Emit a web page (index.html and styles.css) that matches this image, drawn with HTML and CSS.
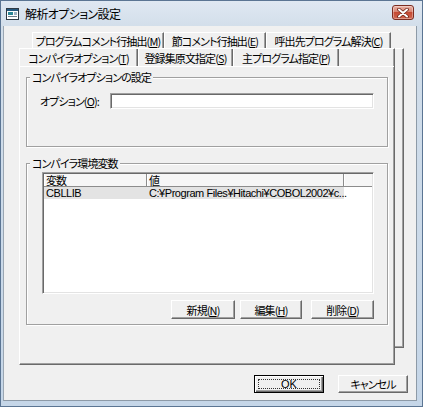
FILE: index.html
```html
<!DOCTYPE html>
<html lang="ja">
<head>
<meta charset="utf-8">
<title>解析オプション設定</title>
<link rel="stylesheet" href="styles.css">
</head>
<body>
<div class="window">
  <div class="titlebar">
    <span class="app-icon">
      <svg width="13" height="12" viewBox="0 0 13 12">
        <rect x="0.5" y="0.5" width="12" height="11" fill="#ffffff" stroke="#2f3a44"/>
        <rect x="1" y="1" width="11" height="2" fill="#24587e"/>
        <rect x="2" y="4" width="5" height="3" fill="#2b8796"/>
        <rect x="2" y="8" width="9" height="1" fill="#6a7c8a"/>
        <rect x="8" y="4" width="3" height="3" fill="#9fb4c4"/>
      </svg>
    </span>
    <span class="title">解析オプション設定</span>
    <span class="close-btn">
      <svg width="12" height="10" viewBox="0 0 12 10">
        <path d="M2 1.5 L10 8.5 M10 1.5 L2 8.5" stroke="#6d2418" stroke-width="3.6" stroke-linecap="round"/>
        <path d="M2 1.5 L10 8.5 M10 1.5 L2 8.5" stroke="#ffffff" stroke-width="2" stroke-linecap="round"/>
      </svg>
    </span>
  </div>
  <div class="client">
    <div class="tabstack">
      <div class="layer layer-back">
        <div class="tabrow">
          <div class="tab tab-b1">プログラムコメント行抽出(<u>M</u>)</div>
          <div class="tab tab-b2">節コメント行抽出(<u>E</u>)</div>
          <div class="tab tab-b3">呼出先プログラム解決(<u>C</u>)</div>
        </div>
        <div class="panel panel-back"></div>
      </div>
      <div class="layer layer-front">
        <div class="tabrow tabrow-front">
          <div class="tab tab-f1">コンパイラオプション(<u>T</u>)</div>
          <div class="tab tab-f2">登録集原文指定(<u>S</u>)</div>
          <div class="tab tab-f3">主プログラム指定(<u>P</u>)</div>
        </div>
        <div class="panel panel-front">
          <div class="group group-opt">
            <div class="group-title">コンパイラオプションの設定</div>
            <div class="opt-row">
              <span class="opt-label">オプション(<u>O</u>):</span>
              <span class="textbox"></span>
            </div>
          </div>
          <div class="group group-env">
            <div class="group-title">コンパイラ環境変数</div>
            <div class="listview">
              <div class="lv-header">
                <div class="lv-h lv-c1">変数</div>
                <div class="lv-h lv-c2">値</div>
                <div class="lv-h lv-rest"></div>
              </div>
              <div class="lv-row lv-selected">
                <div class="lv-cell lv-c1 latin">CBLLIB</div>
                <div class="lv-cell lv-c2 latin">C:¥Program Files¥Hitachi¥COBOL2002¥c...</div>
              </div>
            </div>
            <div class="btn-row">
              <button class="btn btn-new">新規(<u>N</u>)</button>
              <button class="btn btn-edit">編集(<u>H</u>)</button>
              <button class="btn btn-del">削除(<u>D</u>)</button>
            </div>
          </div>
        </div>
      </div>
    </div>
    <div class="dialog-buttons">
      <button class="btn btn-dlg btn-default"><span class="focus-rect">OK</span></button>
      <button class="btn btn-dlg btn-cancel">キャンセル</button>
    </div>
  </div>
</div>
</body>
</html>
```
FILE: styles.css
```css
* { box-sizing: border-box; }
html, body { margin: 0; padding: 0; }
body {
  width: 423px;
  height: 407px;
  overflow: hidden;
  background: #ffffff;
  font-family: "Noto Sans CJK JP", "Noto Sans", sans-serif;
  font-size: 11px;
  letter-spacing: -0.9px;
  font-feature-settings: "palt";
  color: #000;
}
u { text-decoration: underline; text-underline-offset: 1px; }

.window {
  width: 423px;
  height: 407px;
  display: flex;
  flex-direction: column;
  border: 1px solid #5b7593;
  background: linear-gradient(to bottom, #dfe8f2 0, #d2deea 26px, #c5d6e8 100%);
  padding: 0 5px 5px 2px;
}

/* title bar */
.titlebar {
  height: 25px;
  flex: none;
  display: flex;
  align-items: center;
  padding-left: 3px;
}
.app-icon { display: flex; width: 13px; height: 12px; margin-top: 1px; }
.title {
  margin-left: 6px;
  font-size: 12px;
  letter-spacing: -0.6px;
  line-height: 14px;
  color: #000;
}
.close-btn {
  margin-left: auto;
  margin-right: 3px;
  margin-top: -2px;
  width: 22px;
  height: 15px;
  border: 1px solid #7c2c20;
  border-radius: 3px;
  background: linear-gradient(to bottom, #eab3a6 0%, #d98270 45%, #c54a33 50%, #d0654e 100%);
  box-shadow: inset 0 0 0 1px rgba(255,255,255,0.35);
  display: flex;
  align-items: center;
  justify-content: center;
}

/* client */
.client {
  flex: 1;
  background: #f0f0f0;
  border-left: 1px solid #9aa6b2;
  border-right: 1px solid #8d9aa7;
  border-bottom: 1px solid #8d9aa7;
  display: flex;
  flex-direction: column;
}

.tabstack {
  display: grid;
  height: 339px;
  flex: none;
}
.layer {
  grid-area: 1 / 1;
  align-self: start;
  justify-self: start;
  display: flex;
  flex-direction: column;
}
.layer-back {
  margin: 6px 0 0 28px;
  width: 372px;
  height: 316px;
}
.layer-front {
  margin: 22px 0 0 15px;
  width: 376px;
  height: 317px;
  background: #f0f0f0;
  border-top: 1px solid #ffffff;
  border-left: 1px solid #ffffff;
  border-right: 1px solid #6a6a6a;
  border-bottom: 1px solid #6a6a6a;
  box-shadow: inset -1px -1px 0 #a0a0a0;
}

.tabrow { display: flex; height: 16px; flex: none; }
.tabrow-front { height: 17px; }
.tab {
  height: 100%;
  display: flex;
  align-items: center;
  justify-content: center;
  white-space: nowrap;
  line-height: 14px;
  border-right: 1px solid #6a6a6a;
  box-shadow: inset -1px 0 0 #a0a0a0;
}
.layer-back .tab { border-top: 1px solid #ffffff; border-left: 1px solid #ffffff; }
.tab-b1 { width: 132px; }
.tab-b2 { width: 102px; }
.tab-b3 { width: 125px; }
.tab-f1 { width: 118px; border-left: 0; }
.tab-f2 { width: 95px; border-left: 1px solid #ffffff; }
.tab-f3 { width: 106px; border-left: 1px solid #ffffff; }

.panel { flex: 1; }
.panel-back {
  border-top: 1px solid #ffffff;
  border-right: 1px solid #6a6a6a;
  border-bottom: 1px solid #6a6a6a;
  box-shadow: inset -1px -1px 0 #a0a0a0;
}
.panel-front {
  border-top: 1px solid #ffffff;
  padding: 0 0 0 6px;
  display: flex;
  flex-direction: column;
}

/* group boxes */
.group {
  width: 362px;
  border: 1px solid #a0a0a0;
  box-shadow: inset 1px 1px 0 #ffffff, 1px 1px 0 #ffffff;
  display: flex;
  flex-direction: column;
}
.group-opt { margin-top: 10px; height: 70px; }
.group-env { margin-top: 16px; height: 162px; }
.group-title {
  align-self: flex-start;
  margin: -8px 0 0 3px;
  padding: 0 2px;
  line-height: 14px;
  background: #f0f0f0;
  white-space: nowrap;
}

.opt-row {
  margin-top: 9px;
  display: flex;
  align-items: center;
  padding-left: 13px;
}
.opt-label { width: 70px; flex: none; line-height: 14px; white-space: nowrap; }
.textbox {
  width: 264px;
  height: 16px;
  flex: none;
  background: #ffffff;
  border: 1px solid;
  border-color: #a0a0a0 #ffffff #ffffff #a0a0a0;
  box-shadow: inset 1px 1px 0 #696969, inset -1px -1px 0 #e3e3e3;
}

/* list view */
.listview {
  margin: 2px 0 0 15px;
  width: 332px;
  height: 122px;
  background: #ffffff;
  border: 1px solid;
  border-color: #a0a0a0 #ffffff #ffffff #a0a0a0;
  box-shadow: inset 1px 1px 0 #696969, inset -1px -1px 0 #e3e3e3;
  padding: 1px;
  display: flex;
  flex-direction: column;
}
.lv-header {
  display: flex;
  height: 13px;
  flex: none;
  background: #f6f6f6;
  border-bottom: 1px solid #8c8c8c;
}
.lv-h {
  line-height: 12px;
  padding-left: 2px;
  border-right: 1px solid #8c8c8c;
  box-shadow: inset 1px 0 0 #ffffff;
  white-space: nowrap;
}
.lv-c1 { width: 103px; flex: none; }
.lv-c2 { width: 197px; flex: none; }
.lv-rest { flex: 1; border-right: 0; }
.lv-row { display: flex; height: 12px; align-self: flex-start; }
.lv-selected { background: #e3e3e3; }
.lv-cell {
  line-height: 12px;
  padding-left: 2px;
  white-space: nowrap;
}
.latin {
  font-family: "Liberation Sans", Arial, sans-serif;
  font-size: 11px;
  letter-spacing: -0.45px;
}

/* buttons */
.btn-row {
  margin-top: 6px;
  display: flex;
  justify-content: flex-end;
  padding-right: 13px;
}
.btn {
  font-family: inherit;
  font-size: 11px;
  letter-spacing: -0.9px;
  font-feature-settings: "palt";
  color: #000;
  margin: 0;
  padding: 0;
  height: 19px;
  line-height: 14px;
  background: #f0f0f0;
  border: 1px solid;
  border-color: #ffffff #696969 #696969 #ffffff;
  box-shadow: inset -1px -1px 0 #a0a0a0;
  display: flex;
  align-items: center;
  justify-content: center;
  white-space: nowrap;
}
.btn-new { width: 64px; }
.btn-edit { width: 62px; margin-left: 5px; }
.btn-del { width: 63px; margin-left: 9px; }

.dialog-buttons {
  margin-top: 10px;
  display: flex;
  justify-content: flex-end;
  padding-right: 8px;
}
.btn-dlg { width: 70px; height: 18px; }
.btn-cancel { margin-left: 14px; }
.btn-default {
  border: 1px solid #000;
  box-shadow: inset 1px 1px 0 #ffffff, inset -1px -1px 0 #696969, inset -2px -2px 0 #a0a0a0;
  padding: 3px;
}
.focus-rect {
  width: 100%;
  height: 100%;
  border: 1px dotted #333;
  display: flex;
  align-items: center;
  justify-content: center;
  line-height: 10px;
  letter-spacing: 0;
  font-family: "Liberation Sans", Arial, sans-serif;
}
```
